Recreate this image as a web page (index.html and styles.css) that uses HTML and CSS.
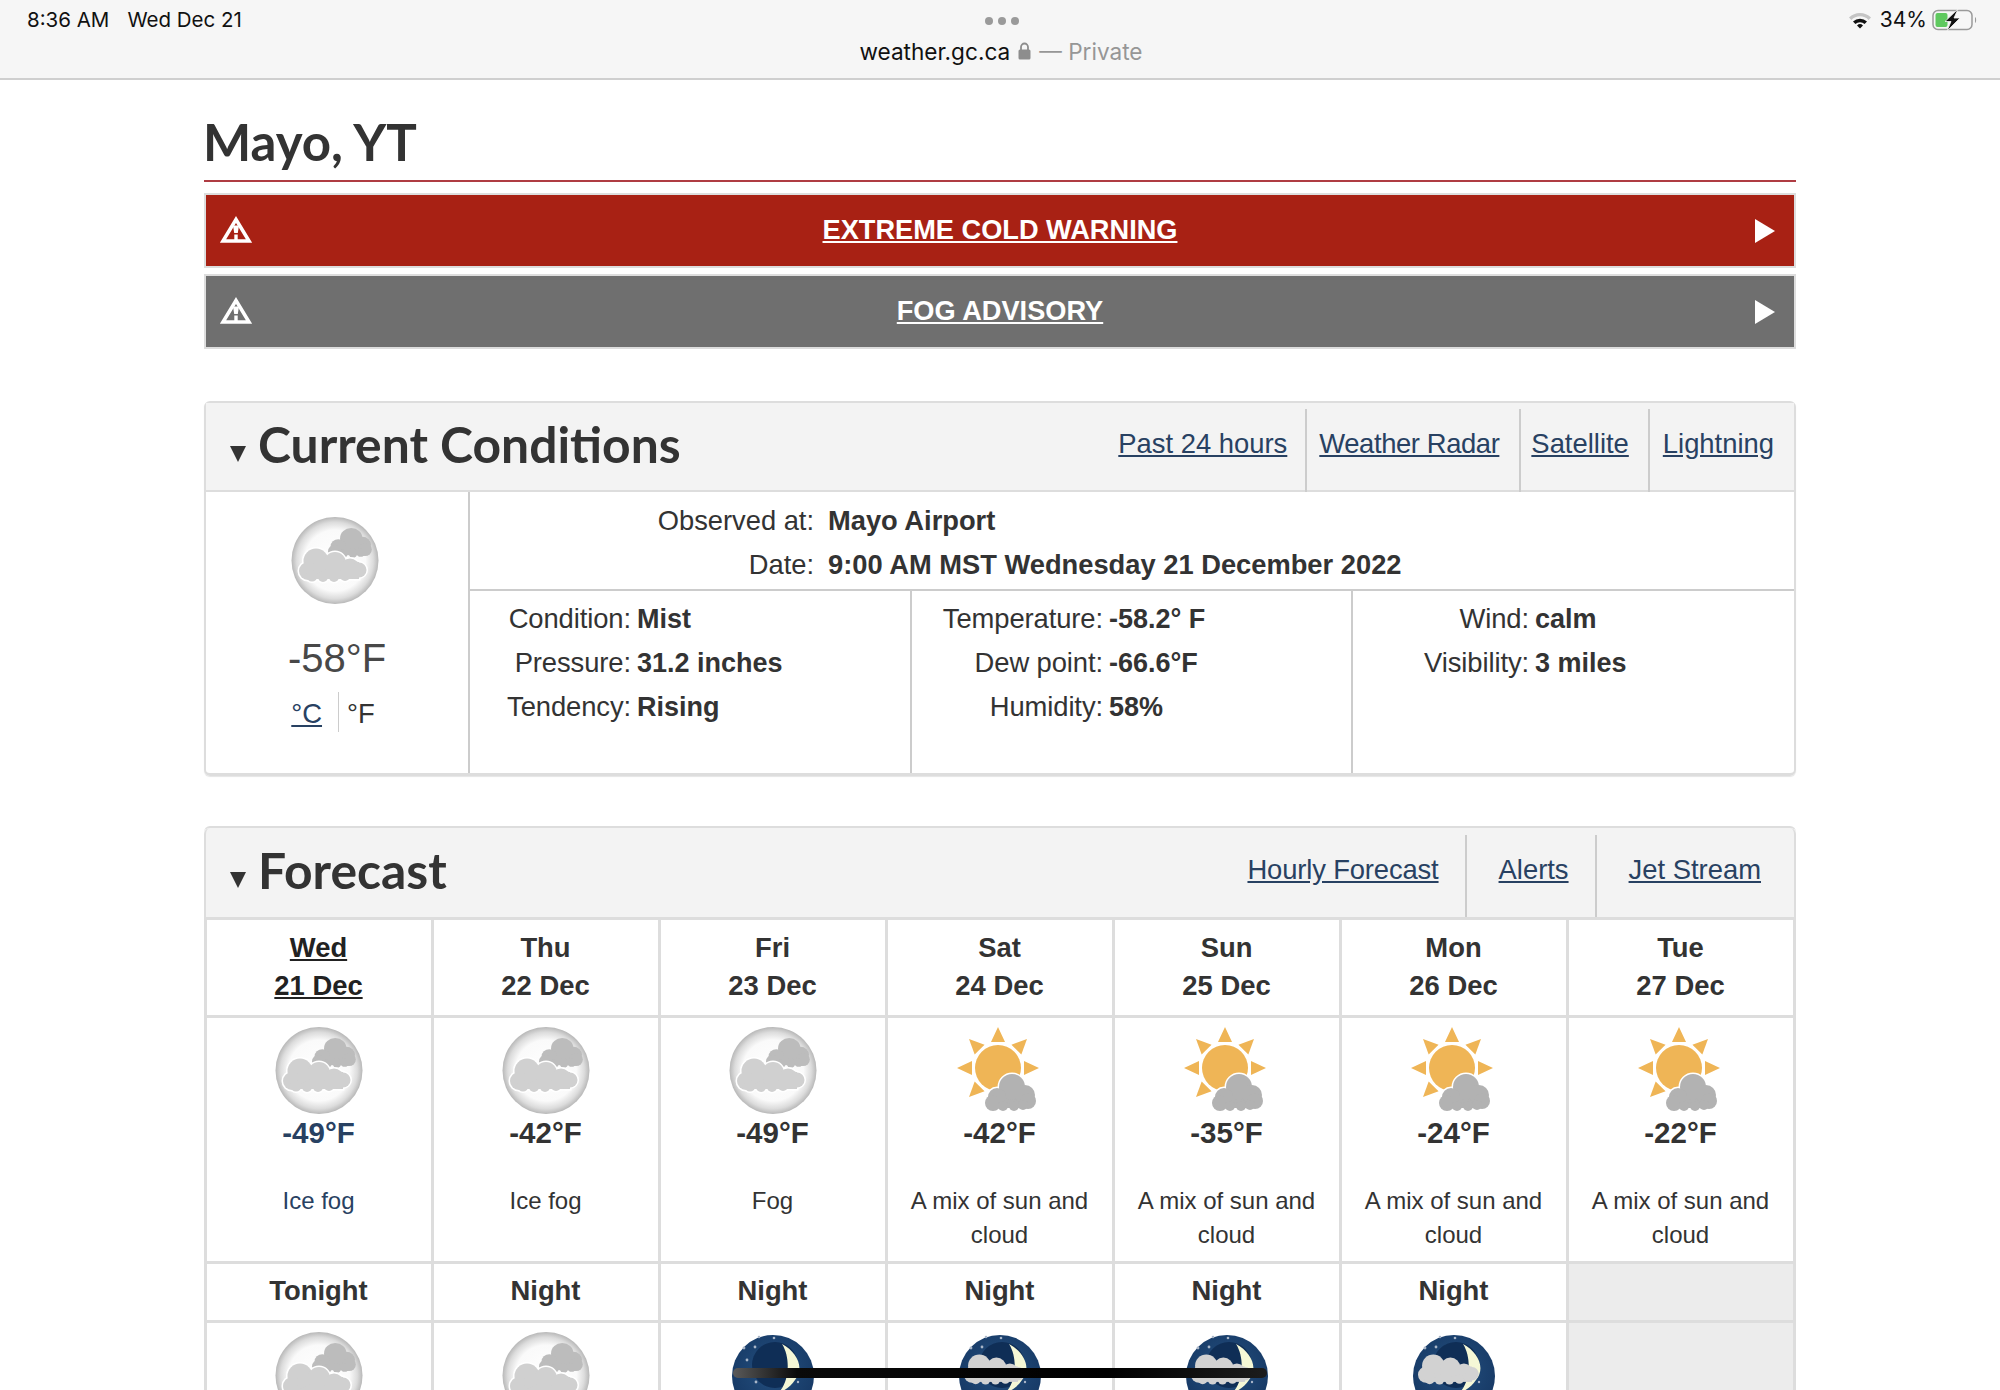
FILE: index.html
```html
<!DOCTYPE html>
<html lang="en">
<head>
<meta charset="utf-8">
<title>Mayo, YT</title>
<link rel="stylesheet" href="styles.css">
</head>
<body>
<svg class="defs" width="0" height="0" aria-hidden="true">
  <defs>
    <radialGradient id="fogdisk" cx="50%" cy="50%" r="50%">
      <stop offset="0" stop-color="#ffffff"/>
      <stop offset="0.7" stop-color="#fafafa"/>
      <stop offset="0.88" stop-color="#dcdcdc"/>
      <stop offset="1" stop-color="#b8b8b8"/>
    </radialGradient>
    <radialGradient id="nightdisk" cx="50%" cy="42%" r="55%">
      <stop offset="0" stop-color="#245080"/>
      <stop offset="1" stop-color="#173a66"/>
    </radialGradient>
    <g id="puff-wide">
      <rect x="8" y="14" width="52" height="17"/>
      <circle cx="17" cy="13" r="12.5"/><circle cx="36" cy="15" r="11"/><circle cx="51" cy="20" r="9.5"/>
      <circle cx="9" cy="23" r="9"/><circle cx="60" cy="22" r="7.5"/><circle cx="13" cy="28" r="5.5"/>
      <circle cx="24" cy="29" r="5"/><circle cx="35" cy="29" r="5"/><circle cx="46" cy="28" r="5"/><circle cx="56" cy="26" r="5"/>
    </g>
    <g id="puff-tall">
      <rect x="9" y="18" width="34" height="16"/>
      <circle cx="27" cy="13" r="13"/><circle cx="12" cy="23" r="9"/><circle cx="40" cy="21" r="10"/>
      <circle cx="8" cy="29" r="8"/><circle cx="43" cy="27" r="8"/><circle cx="18" cy="32" r="5"/>
      <circle cx="29" cy="32" r="5"/><circle cx="38" cy="31" r="5"/>
    </g>
    <symbol id="fog" viewBox="0 0 88 88">
      <circle cx="44" cy="43.500" r="43.500" fill="url(#fogdisk)"/>
      <use href="#puff-tall" transform="translate(37 11) scale(.86 .8)" fill="#bcbcbc"/>
      <use href="#puff-wide" transform="translate(8 31)" fill="#fff" stroke="#fff" stroke-width="3"/>
      <use href="#puff-wide" transform="translate(8 31)" fill="#d0d0d0"/>
    </symbol>
    <symbol id="sun" viewBox="0 0 88 88">
      <g fill="#efb556">
        <circle cx="42" cy="41" r="23"/>
        <polygon id="ray" points="42,0 35,15 49,15"/>
        <use href="#ray" transform="rotate(45 42 41)"/>
        <use href="#ray" transform="rotate(90 42 41)"/>
        <use href="#ray" transform="rotate(-45 42 41)"/>
        <use href="#ray" transform="rotate(-90 42 41)"/>
        <use href="#ray" transform="rotate(-135 42 41)"/>
      </g>
      <use href="#puff-tall" transform="translate(29 47)" fill="#fff" stroke="#fff" stroke-width="3"/>
      <use href="#puff-tall" transform="translate(29 47)" fill="#b2b2b2"/>
    </symbol>
    <g id="stars" fill="#a9b6c8">
      <circle cx="30" cy="5" r="1.3"/><circle cx="45" cy="6" r="1.3"/><circle cx="15" cy="16" r="1.4"/>
      <circle cx="26" cy="15" r="1.4"/><circle cx="18" cy="28" r="1.4"/><circle cx="27" cy="50" r="1.4"/>
      <circle cx="69" cy="50" r="1.2"/>
    </g>
    <symbol id="moon" viewBox="0 0 88 88">
      <circle cx="44" cy="44" r="41" fill="url(#nightdisk)"/>
      <circle cx="46" cy="33" r="23" fill="#0f2e56"/>
      <use href="#stars"/>
      <path d="M53 12 C68 20 76 36 66 48 C62 54 56 59 50 60 C60 50 62 26 53 12Z" fill="#f5f8d6"/>
    </symbol>
    <symbol id="mooncloud" viewBox="0 0 88 88">
      <circle cx="44" cy="44" r="41" fill="url(#nightdisk)"/>
      <circle cx="46" cy="33" r="23" fill="#0f2e56"/>
      <use href="#stars"/>
      <path d="M53 12 C68 20 76 36 66 48 C62 54 56 59 50 60 C60 50 62 26 53 12Z" fill="#f5f8d6"/>
      <use href="#puff-wide" transform="translate(8 22) scale(.9)" fill="#d2d2d2"/>
    </symbol>
    <symbol id="warn" viewBox="0 0 32 27">
      <path d="M16 3.500 L29 25 H3 Z" fill="none" stroke="#fff" stroke-width="3.500" stroke-linejoin="miter"/>
      <path d="M13 9.500 H19 L17.800 17 H14.200 Z M14.300 18.500 H17.700 V24 H14.300 Z" fill="#fff"/>
    </symbol>
  </defs>
</svg>

<header class="statusbar">
  <div class="status-left"><span>8:36 AM</span><span>Wed Dec 21</span></div>
  <div class="status-center">
    <div class="dots"><i></i><i></i><i></i></div>
    <div class="url">weather.gc.ca
      <svg class="lock" width="13" height="18" viewBox="0 0 13 18"><path d="M3 8V5a3.500 3.500 0 0 1 7 0v3" fill="none" stroke="#8d8d8d" stroke-width="1.800"/><rect x="0.500" y="7.500" width="12" height="10" rx="1.500" fill="#8d8d8d"/></svg>
      <span class="private">— Private</span></div>
  </div>
  <div class="status-right">
    <svg class="wifi" width="24" height="18" viewBox="0 0 24 18"><path d="M1 6.500a15.500 15.500 0 0 1 22 0l-2.400 2.400a12 12 0 0 0-17.200 0Z" fill="#c4c4c4"/><path d="M5 10.600a10 10 0 0 1 14 0l-2.400 2.400a6.600 6.600 0 0 0-9.200 0Z" fill="#111"/><path d="M9 14.500a4.400 4.400 0 0 1 6 0L12 17.600Z" fill="#111"/></svg>
    <span class="pct">34%</span>
    <svg class="battery" width="46" height="22" viewBox="0 0 46 22"><rect x="1" y="1.500" width="39" height="19" rx="5" fill="none" stroke="#9a9a9a" stroke-width="1.500"/><rect x="3.500" y="4" width="12" height="14" rx="2" fill="#5fc95f"/><path d="M43 8c1.500.5 1.500 5.500 0 6Z" fill="#9a9a9a"/><path d="M26 0 L13 12.500 H19 L15 22 L28 9 H22 Z" fill="#111" stroke="#f6f6f6" stroke-width=".8"/></svg>
  </div>
</header>

<main class="page">
  <h1 class="title">Mayo, YT</h1>

  <a class="alert alert-red" href="#">
    <svg class="warn-icon"><use href="#warn"/></svg>
    <span class="alert-text">EXTREME COLD WARNING</span>
    <span class="alert-arrow"></span>
  </a>
  <a class="alert alert-grey" href="#">
    <svg class="warn-icon"><use href="#warn"/></svg>
    <span class="alert-text">FOG ADVISORY</span>
    <span class="alert-arrow"></span>
  </a>

  <section class="panel current">
    <div class="panel-head">
      <h2 class="panel-title"><span class="caret"></span>Current Conditions</h2>
      <nav class="panel-links links-current">
        <a href="#">Past 24 hours</a><a href="#">Weather Radar</a><a href="#">Satellite</a><a href="#">Lightning</a>
      </nav>
    </div>
    <div class="current-body">
      <div class="now">
        <svg class="now-icon"><use href="#fog"/></svg>
        <div class="now-temp">-58°F</div>
        <div class="units"><a href="#">°C</a><span>°F</span></div>
      </div>
      <div class="details">
        <div class="observed">
          <span class="lab">Observed at:</span><strong>Mayo Airport</strong>
          <span class="lab">Date:</span><strong>9:00 AM MST Wednesday 21 December 2022</strong>
        </div>
        <div class="obs-cols">
          <dl class="obs obs-a">
            <dt>Condition:</dt><dd>Mist</dd>
            <dt>Pressure:</dt><dd>31.2 inches</dd>
            <dt>Tendency:</dt><dd>Rising</dd>
          </dl>
          <dl class="obs obs-b">
            <dt>Temperature:</dt><dd>-58.2° F</dd>
            <dt>Dew point:</dt><dd>-66.6°F</dd>
            <dt>Humidity:</dt><dd>58%</dd>
          </dl>
          <dl class="obs obs-c">
            <dt>Wind:</dt><dd>calm</dd>
            <dt>Visibility:</dt><dd>3 miles</dd>
          </dl>
        </div>
      </div>
    </div>
  </section>

  <section class="panel forecast">
    <div class="panel-head">
      <h2 class="panel-title"><span class="caret"></span>Forecast</h2>
      <nav class="panel-links links-forecast">
        <a href="#">Hourly Forecast</a><a href="#">Alerts</a><a href="#">Jet Stream</a>
      </nav>
    </div>
    <div class="fc-grid">
      <div class="cell day today"><a href="#">Wed<br>21 Dec</a></div>
      <div class="cell day">Thu<br>22 Dec</div>
      <div class="cell day">Fri<br>23 Dec</div>
      <div class="cell day">Sat<br>24 Dec</div>
      <div class="cell day">Sun<br>25 Dec</div>
      <div class="cell day">Mon<br>26 Dec</div>
      <div class="cell day">Tue<br>27 Dec</div>

      <div class="cell fc today"><svg class="fc-icon"><use href="#fog"/></svg><b>-49°F</b><p>Ice fog</p></div>
      <div class="cell fc"><svg class="fc-icon"><use href="#fog"/></svg><b>-42°F</b><p>Ice fog</p></div>
      <div class="cell fc"><svg class="fc-icon"><use href="#fog"/></svg><b>-49°F</b><p>Fog</p></div>
      <div class="cell fc"><svg class="fc-icon"><use href="#sun"/></svg><b>-42°F</b><p>A mix of sun and cloud</p></div>
      <div class="cell fc"><svg class="fc-icon"><use href="#sun"/></svg><b>-35°F</b><p>A mix of sun and cloud</p></div>
      <div class="cell fc"><svg class="fc-icon"><use href="#sun"/></svg><b>-24°F</b><p>A mix of sun and cloud</p></div>
      <div class="cell fc"><svg class="fc-icon"><use href="#sun"/></svg><b>-22°F</b><p>A mix of sun and cloud</p></div>

      <div class="cell part">Tonight</div>
      <div class="cell part">Night</div>
      <div class="cell part">Night</div>
      <div class="cell part">Night</div>
      <div class="cell part">Night</div>
      <div class="cell part">Night</div>
      <div class="cell part blank"></div>

      <div class="cell fc"><svg class="fc-icon"><use href="#fog"/></svg></div>
      <div class="cell fc"><svg class="fc-icon"><use href="#fog"/></svg></div>
      <div class="cell fc"><svg class="fc-icon"><use href="#moon"/></svg></div>
      <div class="cell fc"><svg class="fc-icon"><use href="#mooncloud"/></svg></div>
      <div class="cell fc"><svg class="fc-icon"><use href="#mooncloud"/></svg></div>
      <div class="cell fc"><svg class="fc-icon"><use href="#mooncloud"/></svg></div>
      <div class="cell fc blank"></div>
    </div>
  </section>
</main>
<div class="home-bar"></div>
</body>
</html>
```
FILE: styles.css
```css
* { box-sizing: border-box; }
html, body { margin: 0; height: 1390px; overflow: hidden; background: #fff; }
body { position: relative; font-family: "Liberation Sans", Arial, sans-serif; font-size: 27.4px; color: #333; }
a { color: #284162; }
.defs { position: absolute; }

.statusbar { height: 80px; background: #f6f6f6; border-bottom: 2px solid #cfcfcf; display: grid; grid-template-columns: 1fr auto 1fr; padding: 8px 22px 0 27px; font-family: Inter, "Liberation Sans", sans-serif; color: #111; }
.status-left { display: flex; gap: 18px; font-size: 20.5px; line-height: 24px; }
.status-center { display: flex; flex-direction: column; align-items: center; }
.dots { display: flex; gap: 5px; height: 28px; padding-top: 9px; }
.dots i { width: 8px; height: 8px; border-radius: 50%; background: #9a9a9a; }
.url { font-size: 22.6px; line-height: 32px; white-space: nowrap; display: flex; align-items: center; gap: 8px; margin-left: -3px; }
.lock { margin-top: -2px; }
.private { color: #969696; }
.status-right { display: flex; justify-content: flex-end; align-items: flex-start; gap: 8px; font-size: 21px; line-height: 24px; }
.wifi { margin-top: 3px; }
.battery { margin: 1px 0 0 -3px; }

.page { width: 1592px; margin: 0 auto; }
.title { font-family: Lato, sans-serif; font-weight: 700; font-size: 51px; line-height: 60px; color: #333; margin: 0; padding: 32px 0 8px; text-indent: -1px; border-bottom: 2px solid #af3c43; height: 102px; }

.alert { display: flex; align-items: center; justify-content: center; position: relative; height: 75px; padding-bottom: 1px; border: 2px solid #ddd; color: #fff; font-weight: 700; font-size: 27.2px; }
.alert-red { background: #a82114; margin-top: 11px; }
.alert-grey { background: #6f6f6f; margin-top: 6px; }
.warn-icon { position: absolute; left: 14px; top: 21px; width: 32px; height: 27px; }
.alert-arrow { position: absolute; right: 19px; top: 24px; border-left: 20px solid #fff; border-top: 12px solid transparent; border-bottom: 12px solid transparent; }

.panel { border: 2px solid #ddd; border-radius: 6px; }
.current { margin-top: 52px; height: 375px; border-bottom-width: 3px; box-shadow: 0 1px 1px #e5e5e5; }
.forecast { margin-top: 50px; border-bottom: 0; border-left: 0; border-right: 0; border-radius: 6px 6px 0 0; }
.panel-head { height: 89px; display: flex; justify-content: space-between; background: #f3f3f3; border-bottom: 2px solid #ddd; }
.forecast .panel-head { border-left: 2px solid #ddd; border-right: 2px solid #ddd; border-radius: 6px 6px 0 0; border-bottom: 0; }
.panel-title { font-family: Lato, sans-serif; font-weight: 700; font-size: 49.8px; line-height: 60px; color: #333; margin: 0; padding: 0 0 6px 24px; display: flex; align-items: center; }
.caret { width: 0; height: 0; margin: 20px 12px 0 0; border-top: 16px solid #333; border-left: 8px solid transparent; border-right: 8px solid transparent; }
.panel-links { display: flex; padding-top: 6px; }
.panel-links a { line-height: 70px; height: 83px; border-left: 2px solid #ccc; }
.panel-links a:first-child { border-left: 0; }
.links-current a { padding: 0 18px 0 12px; }
.links-current a:nth-child(2) { letter-spacing: -0.4px; padding-right: 20px; }
.links-current a:nth-child(3) { padding-left: 10px; padding-right: 19px; }
.links-current a:last-child { padding: 0 20px 0 13px; }
.links-forecast { padding-top: 7px; }
.links-forecast a { padding: 0 26px 0 32px; height: 82px; }
.links-forecast a:first-child { letter-spacing: -0.15px; }
.links-forecast a:last-child { padding-right: 33px; }

.current-body { display: flex; height: 281px; }
.now { width: 264px; flex: none; border-right: 2px solid #ccc; text-align: center; padding-top: 25px; }
.now-icon { display: block; margin-left: 85px; width: 88px; height: 88px; }
.now-temp { font-size: 40px; line-height: 46px; margin-top: 30px; color: #484848; }
.units { display: flex; justify-content: center; margin-top: 11px; height: 40px; line-height: 44px; padding-right: 8px; }
.units a { padding-right: 16px; border-right: 1px solid #ccc; }
.units span { padding-left: 8px; }
.details { flex: 1; display: flex; flex-direction: column; }
.observed { display: grid; grid-template-columns: 344px 1fr; grid-auto-rows: 44px; column-gap: 14px; height: 99px; padding-top: 7px; border-bottom: 2px solid #ccc; line-height: 43px; font-size: 27.3px; }
.lab { text-align: right; }
.observed strong, .obs dd { font-weight: 700; }
.obs-cols { display: grid; grid-template-columns: 440px 441px 1fr; flex: 1; }
.obs { margin: 0; display: grid; grid-auto-rows: 44px; align-content: start; column-gap: 6px; padding-top: 6px; line-height: 44px; }
.obs + .obs { border-left: 2px solid #ccc; }
.obs dt { text-align: right; letter-spacing: -0.1px; }
.obs dd { margin: 0; font-size: 27px; }
.obs-a { grid-template-columns: 161px 1fr; }
.obs-b { grid-template-columns: 191px 1fr; }
.obs-c { grid-template-columns: 176px 1fr; }

.fc-grid { display: grid; grid-template-columns: repeat(7, 227px); grid-template-rows: 98px 246px 59px 200px; border-left: 3px solid #ddd; border-top: 3px solid #ddd; }
.cell { border-right: 3px solid #ddd; border-bottom: 3px solid #ddd; padding-right: 1px; text-align: center; }
.day { font-weight: 700; line-height: 38px; padding-top: 9px; }
.day.today a { color: #222; }
.part { font-weight: 700; line-height: 54px; }
.fc { padding-top: 9px; display: flex; flex-direction: column; align-items: center; }
.fc-icon { width: 88px; height: 88px; flex: none; }
.fc b { font-size: 29.5px; line-height: 36px; margin-top: 0; }
.fc p { margin: 33px 0 0; font-size: 24px; line-height: 34px; padding: 0 10px; }
.fc.today, .fc.today b { color: #284162; }
.blank { background: #ececec; }

.home-bar { position: absolute; left: 733px; top: 1368px; width: 534px; height: 10px; border-radius: 5px; background: linear-gradient(90deg, #5a5a5a, #0a0a0a 12%, #000 70%, #1c1c1c); }
```
